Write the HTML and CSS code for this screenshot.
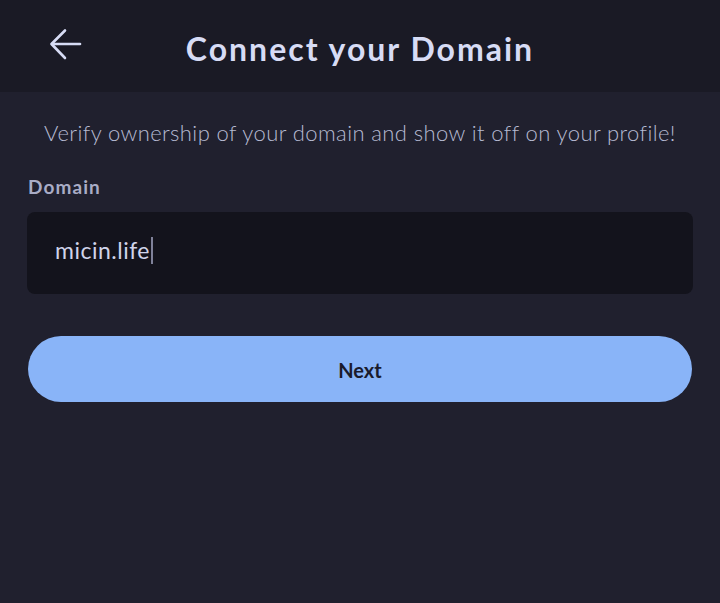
FILE: index.html
```html
<!DOCTYPE html>
<html>
<head>
<meta charset="utf-8">
<link rel="stylesheet" href="styles.css">
</head>
<body>
<div class="screen">
  <header class="topbar">
    <button class="back" aria-label="Back">
      <svg width="34" height="34" viewBox="0 0 34 34" fill="none" stroke="#d7dcf5" stroke-width="2.6" stroke-linecap="round" stroke-linejoin="round">
        <path d="M31 16H3"/>
        <path d="M16 2.5L2.5 16 16 30"/>
      </svg>
    </button>
    <h1 class="title">Connect your Domain</h1>
  </header>
  <main class="content">
    <p class="subtitle">Verify ownership of your domain and show it off on your profile!</p>
    <label class="label">Domain</label>
    <div class="input"><span class="value">micin.life</span><span class="caret"></span></div>
    <button class="next">Next</button>
  </main>
</div>
</body>
</html>
```
FILE: styles.css
```css
html, body {
  margin: 0;
  padding: 0;
  background: #20202e;
}
.screen {
  width: 720px;
  height: 603px;
  display: flex;
  flex-direction: column;
  font-family: "Lato", "Noto Sans", sans-serif;
}
.topbar {
  height: 92px;
  background: #1a1a25;
  position: relative;
  display: flex;
  align-items: center;
  justify-content: center;
}
.back {
  position: absolute;
  left: 49px;
  top: 28px;
  padding: 0;
  border: 0;
  background: none;
  width: 34px;
  height: 34px;
}
.title {
  margin: 0;
  margin-top: 4px;
  font-size: 32px;
  font-weight: 700;
  color: #d7dcf5;
  letter-spacing: 2px;
}
.content {
  padding: 0 27px;
  display: flex;
  flex-direction: column;
}
.subtitle {
  margin: 24px 0 0;
  text-align: center;
  font-size: 22px;
  font-weight: 300;
  color: #b6bad2;
  line-height: 34px;
  letter-spacing: 0.4px;
}
.label {
  margin-top: 26px;
  margin-left: 1px;
  font-size: 19px;
  font-weight: 700;
  color: #a9acc6;
  line-height: 22px;
  letter-spacing: 1.1px;
}
.input {
  margin-top: 14px;
  height: 82px;
  box-sizing: border-box;
  padding-bottom: 6px;
  background: #13131c;
  border-radius: 8px;
  display: flex;
  align-items: center;
  padding-left: 28px;
}
.value {
  font-size: 23px;
  color: #d0d4ea;
  letter-spacing: 0.5px;
  font-family: "Lato", "Noto Sans", sans-serif;
}
.caret {
  width: 2px;
  height: 27px;
  background: #7f8199;
  margin-left: 1px;
}
.next {
  margin: 42px 1px 0;
  height: 66px;
  border: 0;
  border-radius: 33px;
  background: #89b4f8;
  font-family: "Lato", "Noto Sans", sans-serif;
  font-size: 20px;
  font-weight: 700;
  color: #1a1b2c;
  padding-top: 3px;
}
```
